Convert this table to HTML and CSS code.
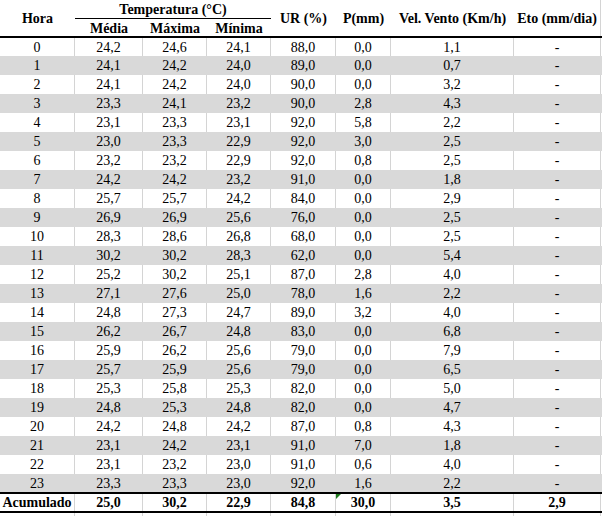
FILE: index.html
```html
<!DOCTYPE html>
<html lang="pt">
<head>
<meta charset="utf-8">
<title>Dados horários</title>
<link rel="stylesheet" href="styles.css">
</head>
<body>
<div class="sheet">
  <div class="head">
    <div class="h-hora">Hora</div>
    <div class="h-temp">Temperatura (°C)</div>
    <div class="h-sub h-media">Média</div>
    <div class="h-sub h-max">Máxima</div>
    <div class="h-sub h-min">Mínima</div>
    <div class="h-ur">UR (%)</div>
    <div class="h-p">P(mm)</div>
    <div class="h-vel">Vel. Vento (Km/h)</div>
    <div class="h-eto">Eto (mm/dia)</div>
  </div>
  <div class="row first"><span>0</span><span>24,2</span><span>24,6</span><span>24,1</span><span>88,0</span><span>0,0</span><span>1,1</span><span>-</span></div>
  <div class="row alt"><span>1</span><span>24,1</span><span>24,2</span><span>24,0</span><span>89,0</span><span>0,0</span><span>0,7</span><span>-</span></div>
  <div class="row"><span>2</span><span>24,1</span><span>24,2</span><span>24,0</span><span>90,0</span><span>0,0</span><span>3,2</span><span>-</span></div>
  <div class="row alt"><span>3</span><span>23,3</span><span>24,1</span><span>23,2</span><span>90,0</span><span>2,8</span><span>4,3</span><span>-</span></div>
  <div class="row"><span>4</span><span>23,1</span><span>23,3</span><span>23,1</span><span>92,0</span><span>5,8</span><span>2,2</span><span>-</span></div>
  <div class="row alt"><span>5</span><span>23,0</span><span>23,3</span><span>22,9</span><span>92,0</span><span>3,0</span><span>2,5</span><span>-</span></div>
  <div class="row"><span>6</span><span>23,2</span><span>23,2</span><span>22,9</span><span>92,0</span><span>0,8</span><span>2,5</span><span>-</span></div>
  <div class="row alt"><span>7</span><span>24,2</span><span>24,2</span><span>23,2</span><span>91,0</span><span>0,0</span><span>1,8</span><span>-</span></div>
  <div class="row"><span>8</span><span>25,7</span><span>25,7</span><span>24,2</span><span>84,0</span><span>0,0</span><span>2,9</span><span>-</span></div>
  <div class="row alt"><span>9</span><span>26,9</span><span>26,9</span><span>25,6</span><span>76,0</span><span>0,0</span><span>2,5</span><span>-</span></div>
  <div class="row"><span>10</span><span>28,3</span><span>28,6</span><span>26,8</span><span>68,0</span><span>0,0</span><span>2,5</span><span>-</span></div>
  <div class="row alt"><span>11</span><span>30,2</span><span>30,2</span><span>28,3</span><span>62,0</span><span>0,0</span><span>5,4</span><span>-</span></div>
  <div class="row"><span>12</span><span>25,2</span><span>30,2</span><span>25,1</span><span>87,0</span><span>2,8</span><span>4,0</span><span>-</span></div>
  <div class="row alt"><span>13</span><span>27,1</span><span>27,6</span><span>25,0</span><span>78,0</span><span>1,6</span><span>2,2</span><span>-</span></div>
  <div class="row"><span>14</span><span>24,8</span><span>27,3</span><span>24,7</span><span>89,0</span><span>3,2</span><span>4,0</span><span>-</span></div>
  <div class="row alt"><span>15</span><span>26,2</span><span>26,7</span><span>24,8</span><span>83,0</span><span>0,0</span><span>6,8</span><span>-</span></div>
  <div class="row"><span>16</span><span>25,9</span><span>26,2</span><span>25,6</span><span>79,0</span><span>0,0</span><span>7,9</span><span>-</span></div>
  <div class="row alt"><span>17</span><span>25,7</span><span>25,9</span><span>25,6</span><span>79,0</span><span>0,0</span><span>6,5</span><span>-</span></div>
  <div class="row"><span>18</span><span>25,3</span><span>25,8</span><span>25,3</span><span>82,0</span><span>0,0</span><span>5,0</span><span>-</span></div>
  <div class="row alt"><span>19</span><span>24,8</span><span>25,3</span><span>24,8</span><span>82,0</span><span>0,0</span><span>4,7</span><span>-</span></div>
  <div class="row"><span>20</span><span>24,2</span><span>24,8</span><span>24,2</span><span>87,0</span><span>0,8</span><span>4,3</span><span>-</span></div>
  <div class="row alt"><span>21</span><span>23,1</span><span>24,2</span><span>23,1</span><span>91,0</span><span>7,0</span><span>1,8</span><span>-</span></div>
  <div class="row"><span>22</span><span>23,1</span><span>23,2</span><span>23,0</span><span>91,0</span><span>0,6</span><span>4,0</span><span>-</span></div>
  <div class="row alt last"><span>23</span><span>23,3</span><span>23,3</span><span>23,0</span><span>92,0</span><span>1,6</span><span>2,2</span><span>-</span></div>
  <div class="row total"><span>Acumulado</span><span>25,0</span><span>30,2</span><span>22,9</span><span>84,8</span><span class="flagged">30,0</span><span>3,5</span><span>2,9</span></div>
  <div class="row empty"><span></span><span></span><span></span><span></span><span></span><span></span><span></span><span></span></div>
</div>
</body>
</html>
```
FILE: styles.css
```css
* { box-sizing: border-box; }
html, body { margin: 0; padding: 0; background: #fff; }
body {
  font-family: "Liberation Serif", "Times New Roman", serif;
  font-size: 14px;
  color: #000;
}
.sheet {
  width: 602px;
  --cols: 75px 68px 64px 64px 65px 55px 123px 87px;
}
.head {
  display: grid;
  grid-template-columns: var(--cols);
  grid-template-rows: 19px 17px;
  border-bottom: 2px solid #000;
  font-weight: bold;
  text-align: center;
}
.head > div {
  display: flex;
  align-items: center;
  justify-content: center;
  white-space: nowrap;
  line-height: 1;
}
.h-hora { grid-column: 1; grid-row: 1 / 3; padding-top: 1px; }
.h-temp {
  grid-column: 2 / 5;
  grid-row: 1;
  border-bottom: 1px solid #000;
  padding-top: 2px;
}
.h-media { grid-column: 2; grid-row: 2; }
.h-max { grid-column: 3; grid-row: 2; }
.h-min { grid-column: 4; grid-row: 2; }
.h-ur { grid-column: 5; grid-row: 1 / 3; padding-top: 1px; }
.h-p { grid-column: 6; grid-row: 1 / 3; padding-top: 1px; }
.h-vel { grid-column: 7; grid-row: 1 / 3; padding-top: 1px; }
.h-eto { grid-column: 8; grid-row: 1 / 3; padding-top: 1px; border-right: 1px solid #d4d4d4; }
.h-sub { padding-top: 3px; }

.row {
  display: grid;
  grid-template-columns: var(--cols);
  height: 19px;
  background: #fff;
}
.row > span {
  display: flex;
  align-items: center;
  justify-content: center;
  border-right: 1px solid #d4d4d4;
  white-space: nowrap;
  position: relative;
  line-height: 1;
  padding-top: 1px;
}
.row.first { height: 18px; }
.row.alt { background: #d9d9d9; }
.row.alt > span { border-right-color: #d9d9d9; }
.row.last { height: 18px; }
.row.total {
  height: 21px;
  border-top: 2px solid #000;
  border-bottom: 2px solid #000;
  font-weight: bold;
}
.row.empty { height: 10px; }
.flagged::before {
  content: "";
  position: absolute;
  left: 0;
  top: 0;
  border-top: 5px solid #1e7b1e;
  border-right: 5px solid transparent;
}
```
